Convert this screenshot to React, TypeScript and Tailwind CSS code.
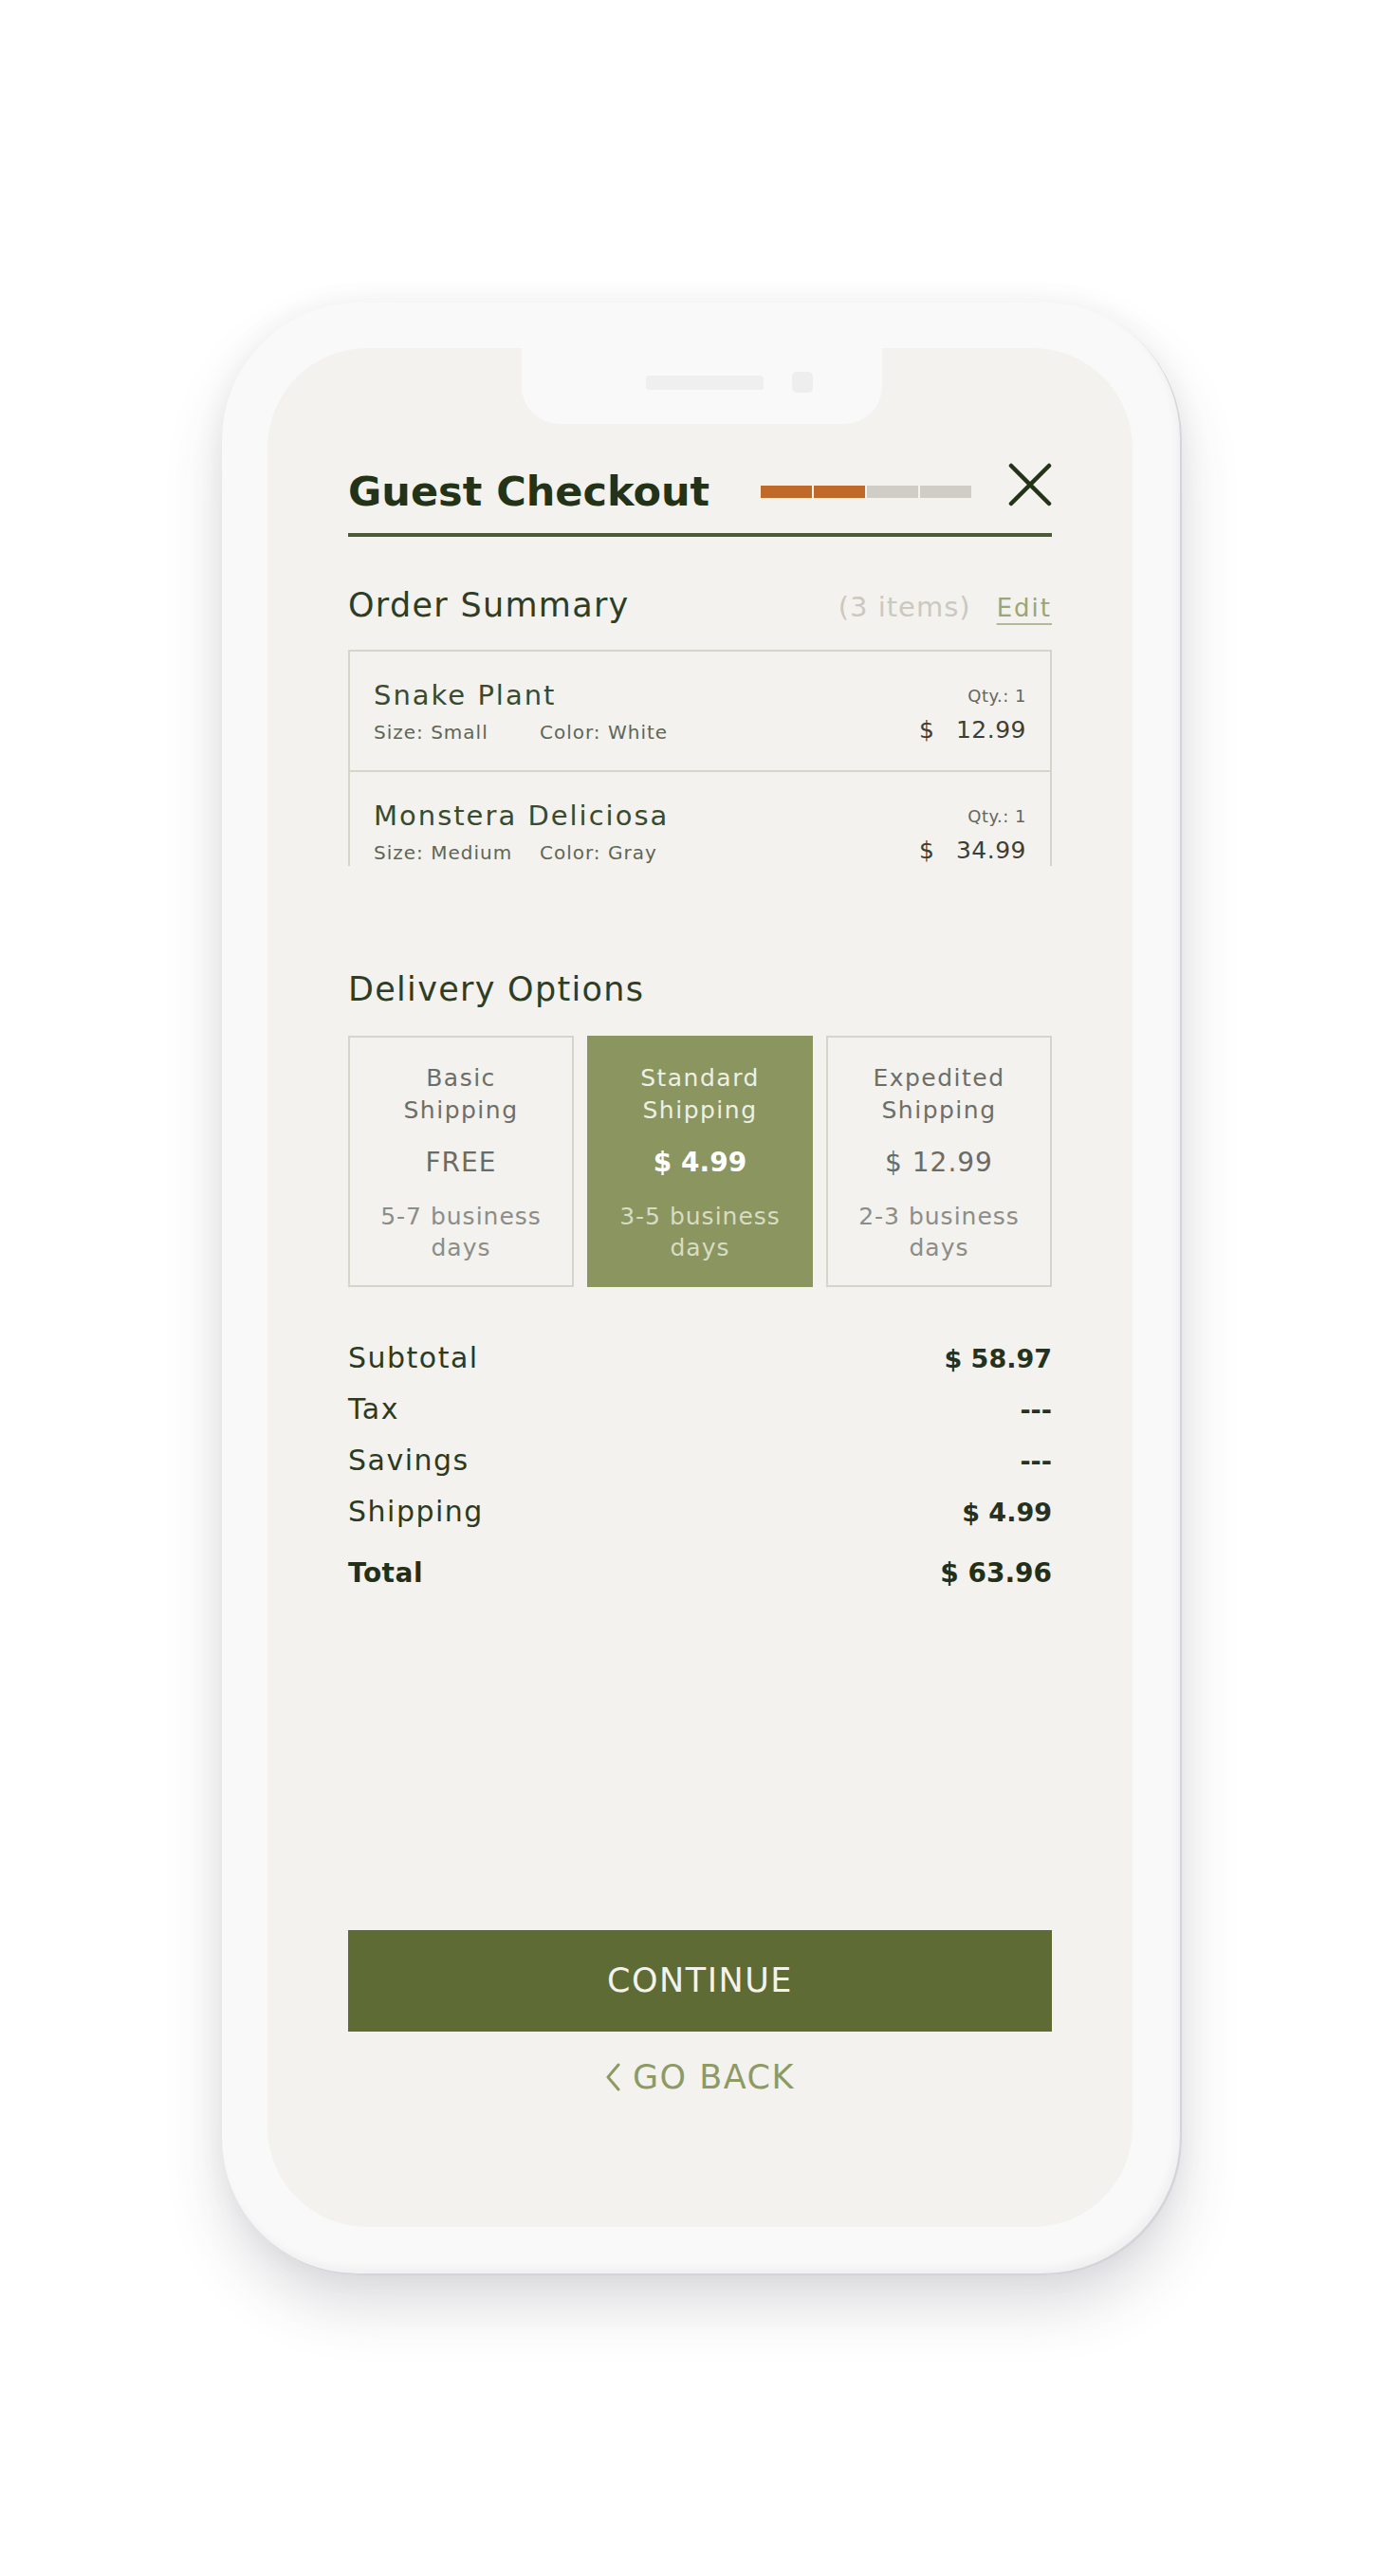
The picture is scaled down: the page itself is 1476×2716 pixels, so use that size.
import React from "react";

function CloseIcon() {
  return (
    <svg width="46" height="46" viewBox="0 0 46 46" fill="none">
      <path d="M3 3 L43 43 M43 3 L3 43" stroke="#233318" strokeWidth="4.5" strokeLinecap="round" />
    </svg>
  );
}

function ChevronLeft() {
  return (
    <svg width="16" height="30" viewBox="0 0 16 30" fill="none">
      <polyline points="14,2 3,15 14,28" stroke="#8e9a64" strokeWidth="3" strokeLinecap="round" strokeLinejoin="round" fill="none" />
    </svg>
  );
}

const items = [
  { name: "Snake Plant", size: "Size: Small", color: "Color: White", qty: "Qty.: 1", price: "12.99" },
  { name: "Monstera Deliciosa", size: "Size: Medium", color: "Color: Gray", qty: "Qty.: 1", price: "34.99" },
];

const options = [
  { t1: "Basic", t2: "Shipping", price: "FREE", d1: "5-7 business", d2: "days", selected: false },
  { t1: "Standard", t2: "Shipping", price: "$ 4.99", d1: "3-5 business", d2: "days", selected: true },
  { t1: "Expedited", t2: "Shipping", price: "$ 12.99", d1: "2-3 business", d2: "days", selected: false },
];

export default function App() {
  return (
    <div className="min-h-[2716px] w-full bg-white flex justify-center pt-[319px] pl-[4px] font-['DejaVu_Sans',sans-serif]">
      <div className="w-[1012px] h-[2080px] rounded-[145px] bg-[#f9f9f9] pt-[48px] pl-[48px] pr-[52px] pb-[51px] shadow-[0_34px_60px_rgba(60,60,80,0.17),0_0_30px_rgba(0,0,0,0.05),inset_-2px_-2px_0_#d4d5da,inset_-6px_-8px_10px_rgba(0,0,0,0.04)]">
        <div className="relative h-full w-full rounded-[105px] bg-[#f3f2ee] flex flex-col px-[85px] pt-[121px] pb-[136px]">
          {/* notch */}
          <div className="absolute top-0 left-[268px] w-[380px] h-[80px] rounded-b-[40px] bg-[#f9f9f9] flex items-center pl-[131px] pb-[8px] gap-[30px]">
            <div className="w-[124px] h-[15px] rounded-[3px] bg-[#efefef]" />
            <div className="w-[22px] h-[22px] rounded-[5px] bg-[#eeeeee]" />
          </div>

          {/* header */}
          <div className="flex items-center h-[60px]">
            <h1 className="text-[43px] font-bold leading-[60px] text-[#233318] whitespace-nowrap">Guest Checkout</h1>
            <div className="ml-[54px] flex gap-[2px]">
              <div className="w-[54px] h-[13px] bg-[#bf6a28]" />
              <div className="w-[54px] h-[13px] bg-[#bf6a28]" />
              <div className="w-[54px] h-[13px] bg-[#cfcdc5]" />
              <div className="w-[54px] h-[13px] bg-[#cfcdc5]" />
            </div>
            <div className="ml-auto self-start">
              <CloseIcon />
            </div>
          </div>
          <div className="mt-[14px] h-[4px] bg-[#4b5a36]" />

          {/* order summary */}
          <div className="mt-[50px] flex items-baseline leading-[44px]">
            <h2 className="text-[35px] tracking-[1.3px] text-[#2f3d25]">Order Summary</h2>
            <span className="ml-auto text-[29px] tracking-[1px] text-[#cac9c1]">(3 items)</span>
            <span className="ml-[27px] text-[26px] tracking-[2px] text-[#9aa677] underline decoration-2 underline-offset-[7px] decoration-[#b3bb95]">Edit</span>
          </div>

          <div className="mt-[22px] h-[228px] overflow-hidden border-x-2 border-t-2 border-[#d6d5cc]">
            {items.map((it) => (
              <div key={it.name} className="flex justify-between px-[25px] pt-[28px] pb-[26px] border-b-2 border-[#d6d5cc]">
                <div className="flex flex-col">
                  <div className="text-[29px] leading-[36px] tracking-[2px] text-[#3a4a2e]">{it.name}</div>
                  <div className="mt-[8px] flex text-[20px] leading-[26px] tracking-[1px] text-[#5f6656]">
                    <span className="w-[175px]">{it.size}</span>
                    <span>{it.color}</span>
                  </div>
                </div>
                <div className="flex flex-col items-end pt-[7px]">
                  <div className="text-[18px] leading-[24px] tracking-[0.5px] text-[#66665e]">{it.qty}</div>
                  <div className="mt-[8px] flex text-[25px] leading-[32px] text-[#3d3f36]">
                    <span>$</span>
                    <span className="w-[97px] text-right tracking-[0.5px]">{it.price}</span>
                  </div>
                </div>
              </div>
            ))}
          </div>

          {/* delivery */}
          <h2 className="mt-[108px] text-[35px] leading-[44px] tracking-[1.3px] text-[#2f3d25]">Delivery Options</h2>
          <div className="mt-[27px] grid grid-cols-3 gap-[14px]">
            {options.map((o) => (
              <div
                key={o.t1}
                className={
                  o.selected
                    ? "h-[265px] border-2 border-[#8a9560] bg-[#8a9560] text-center pt-[26px]"
                    : "h-[265px] border-2 border-[#d6d5cc] text-center pt-[26px]"
                }
              >
                <div className={o.selected ? "text-[25px] leading-[34px] tracking-[1.5px] text-[#eef0e3]" : "text-[25px] leading-[34px] tracking-[1.5px] text-[#6e6e68]"}>
                  <div>{o.t1}</div>
                  <div>{o.t2}</div>
                </div>
                <div className={o.selected ? "mt-[21px] text-[28px] leading-[34px] font-bold text-white" : "mt-[21px] text-[28px] leading-[34px] tracking-[1px] text-[#6b6b66]"}>
                  {o.price}
                </div>
                <div className={o.selected ? "mt-[23px] text-[25px] leading-[33px] tracking-[1px] text-[#d8dcc2]" : "mt-[23px] text-[25px] leading-[33px] tracking-[1px] text-[#8d8d87]"}>
                  <div>{o.d1}</div>
                  <div>{o.d2}</div>
                </div>
              </div>
            ))}
          </div>

          {/* totals */}
          <div className="mt-[48px] flex flex-col">
            {[
              ["Subtotal", "$ 58.97"],
              ["Tax", "---"],
              ["Savings", "---"],
              ["Shipping", "$ 4.99"],
            ].map(([l, v]) => (
              <div key={l} className="flex justify-between items-baseline leading-[53px]">
                <span className="text-[30px] tracking-[1.5px] text-[#2c3a22]">{l}</span>
                <span className="text-[27px] font-bold text-[#263220]">{v}</span>
              </div>
            ))}
            <div className="mt-[11px] flex justify-between items-baseline leading-[53px] text-[28px] font-bold text-[#233018]">
              <span className="tracking-[0.5px]">Total</span>
              <span>$ 63.96</span>
            </div>
          </div>

          {/* actions */}
          <div className="mt-auto flex flex-col">
            <button className="h-[107px] w-full bg-[#5e6b35] flex items-center justify-center text-[35px] tracking-[1.5px] text-[#f4f2ea]">
              CONTINUE
            </button>
            <div className="mt-[26px] flex justify-center items-center gap-[13px] leading-[44px] text-[35px] tracking-[1.5px] text-[#8e9a64]">
              <ChevronLeft />
              <span>GO BACK</span>
            </div>
          </div>
        </div>
      </div>
    </div>
  );
}
